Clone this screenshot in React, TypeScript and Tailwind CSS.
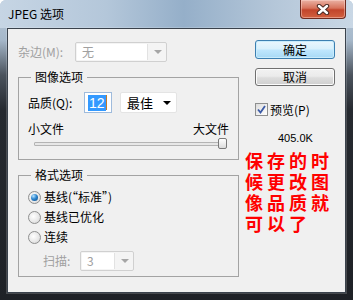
import React from 'react'

// Win7 风格 "JPEG 选项" 对话框

function Arrow({ disabled = false }: { disabled?: boolean }) {
  return (
    <span
      className={`h-0 w-0 border-x-[4px] border-t-[4px] border-x-transparent ${
        disabled ? 'border-t-[#a6a6a6]' : 'border-t-black'
      }`}
    />
  )
}

function DisabledCombo({ value, width }: { value: string; width: string }) {
  return (
    <div className={`flex h-[20px] ${width} rounded-[2px] border border-[#d0d0d0] bg-[#f4f4f4]`}>
      <span className="m-[1px] flex flex-1 items-center border-r border-[#e2e2e2] bg-white pl-[5px] text-[#a0a0a0]">
        {value}
      </span>
      <span className="flex w-[17px] items-center justify-center">
        <Arrow disabled />
      </span>
    </div>
  )
}

function Radio({ checked, label }: { checked?: boolean; label: string }) {
  return (
    <div className="flex h-[20px] items-center">
      <span className="flex h-[13px] w-[13px] items-center justify-center rounded-full border border-[#8e8f8f] bg-[radial-gradient(circle_at_40%_40%,#ffffff_0%,#e6e6e6_60%,#cfcfcf_100%)]">
        {checked && (
          <span className="h-[7px] w-[7px] rounded-full bg-[radial-gradient(circle_at_35%_30%,#b9e4ff_0%,#2d86cf_45%,#0c4680_100%)]" />
        )}
      </span>
      <span className="ml-[3px]">{label}</span>
    </div>
  )
}

function Group({ title, children, className = '' }: { title: string; children: React.ReactNode; className?: string }) {
  return (
    <fieldset className={`border border-[#a3a3a3] px-[9px] ${className}`}>
      <legend className="ml-[3px] px-[4px] leading-[16px]">{title}</legend>
      {children}
    </fieldset>
  )
}

export default function App() {
  return (
    <div className="flex h-[300px] w-[353px] flex-col overflow-hidden rounded-t-[6px] bg-[linear-gradient(180deg,#b9c9da_0px,#a6b8ca_40px,#4b535d_75px,#262a30_110px,#1e2126_100%)] font-['Noto_Sans_CJK_SC',sans-serif] text-[12px] leading-[16px] text-black">
      {/* title bar */}
      <div className="flex h-[28px] shrink-0 items-start justify-between bg-[linear-gradient(90deg,#c6d5e4_0%,#b4c7da_30%,#95afc9_52%,#b5c7d9_78%,#c9d7e5_100%)]">
        <span className="ml-[8px] mt-[5px] leading-[18px]">JPEG 选项</span>
        <div className="mr-[7px] flex h-[19px] w-[46px] items-center justify-center rounded-b-[4px] border border-t-0 border-[#6e2b20] bg-[linear-gradient(180deg,#eab2a4_0%,#d7735c_45%,#c2452b_55%,#d2603f_100%)] shadow-[inset_0_0_0_1px_rgba(255,220,210,0.45)]">
          <svg width="14" height="11" viewBox="0 0 14 11">
            <path d="M3 2 L11 9 M11 2 L3 9" stroke="#4a2a24" strokeWidth="4.4" strokeLinecap="round" />
            <path d="M3 2 L11 9 M11 2 L3 9" stroke="#ffffff" strokeWidth="2.4" strokeLinecap="round" />
          </svg>
        </div>
      </div>

      {/* client */}
      <div className="flex flex-1 px-[7px] pb-[7px]">
        <div className="flex flex-1 border border-[#3a424c] bg-[#f0f0f0] shadow-[0_0_0_1px_rgba(255,255,255,0.18)]">
          {/* left column */}
          <div className="flex w-[231px] flex-col pl-[10px]">
            <div className="mt-[13px] flex items-center">
              <span className="w-[57px] text-[#a0a0a0]">杂边(M):</span>
              <DisabledCombo value="无" width="w-[92px]" />
            </div>

            <Group title="图像选项" className="mt-[7px] pb-[10px]">
              <div className="mt-[7px] flex h-[21px] items-center">
                <span className="w-[56px]">品质(Q):</span>
                <div className="flex h-[21px] w-[28px] items-center border border-[#9fbbdc] bg-white pl-[3px]">
                  <span className="bg-[#3399ff] px-[1px] font-['Liberation_Sans',sans-serif] text-[14px] leading-[16px] text-white">12</span>
                  <span className="h-[15px] w-[1px] bg-[#c27a2a]" />
                </div>
                <div className="ml-[8px] flex h-[21px] w-[57px] items-center justify-between rounded-[2px] border border-[#e4e4e4] bg-white pl-[6px] pr-[5px] text-[13px]">
                  <span>最佳</span>
                  <Arrow />
                </div>
              </div>
              <div className="mt-[8px] flex justify-between">
                <span>小文件</span>
                <span>大文件</span>
              </div>
              <div className="relative ml-[6px] mr-[2px] mt-[1px] flex h-[11px] items-center">
                <div className="h-[4px] flex-1 rounded-[1px] border border-[#b4b4b4] bg-[#e7e7e7]" />
                <div className="absolute right-0 top-0 h-[11px] w-[9px] rounded-[2px] border border-[#7a7a7a] bg-[linear-gradient(180deg,#ffffff,#dcdcdc)]" />
              </div>
            </Group>

            <Group title="格式选项" className="mt-[7px] pb-[5px]">
              <div className="mt-[4px]">
                <Radio checked label="基线(“标准”)" />
                <Radio label="基线已优化" />
                <Radio label="连续" />
              </div>
              <div className="mt-[4px] flex items-center pl-[15px]">
                <span className="w-[37px] text-[#a0a0a0]">扫描:</span>
                <DisabledCombo value="3" width="w-[54px]" />
              </div>
            </Group>
          </div>

          {/* right column */}
          <div className="flex flex-1 flex-col">
            <button className="ml-[16px] mt-[11px] h-[19px] w-[80px] rounded-[3px] border border-[#3c7fb1] bg-[linear-gradient(180deg,#eaf6fd_0%,#d9f0fc_45%,#bee6fd_55%,#a7d9f5_100%)] leading-[16px] shadow-[inset_0_0_0_1px_#c9ecfc]">
              确定
            </button>
            <button className="ml-[16px] mt-[9px] h-[18px] w-[80px] rounded-[3px] border border-[#707070] bg-[linear-gradient(180deg,#f2f2f2_0%,#ebebeb_45%,#dddddd_55%,#cfcfcf_100%)] leading-[16px] shadow-[inset_0_0_0_1px_#fcfcfc]">
              取消
            </button>
            <div className="ml-[16px] mt-[17px] flex h-[13px] items-center">
              <span className="flex h-[13px] w-[13px] items-center justify-center border border-[#8e8f8f] bg-[linear-gradient(135deg,#dcdcdc,#ffffff)]">
                <svg width="9" height="9" viewBox="0 0 9 9">
                  <path d="M1 4.5 L3.5 7.5 L8 1" fill="none" stroke="#3b5aa6" strokeWidth="1.8" />
                </svg>
              </span>
              <span className="ml-[2px]">预览(P)</span>
            </div>
            <span className="ml-[39px] mt-[15px] font-['Liberation_Sans',sans-serif] text-[11px] leading-[14px]">405.0K</span>
            <div className="ml-[6px] mt-[5px] w-[90px] text-[18px] font-bold leading-[21px] tracking-[4px] text-[#ff0000]">
              保存的时候更改图像品质就可以了
            </div>
          </div>
        </div>
      </div>
    </div>
  )
}
